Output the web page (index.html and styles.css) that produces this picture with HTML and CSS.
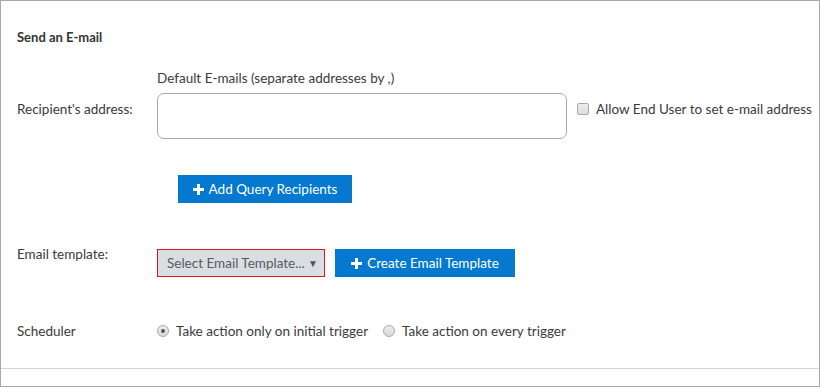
FILE: index.html
```html
<!DOCTYPE html>
<html lang="en">

<head>
  <meta charset="UTF-8">
  <meta name="viewport" content="width=device-width, initial-scale=1.0">
  <title>Send an E-mail</title>
  <link rel="stylesheet" href="styles.css">
</head>

<body>
  <div id="panel">
    <div class="content">
      <h3 class="title">Send an E-mail</h3>

      <div class="recipients">
        <div></div>
        <div class="hint">Default E-mails (separate addresses by ,)</div>
        <label class="field-label label-recipient" for="recipient">Recipient's address:</label>
        <div class="recipient-line">
          <textarea id="recipient" class="address"></textarea>
          <label class="check">
            <span class="box"></span>
            Allow End User to set e-mail address
          </label>
        </div>
      </div>

      <button type="button" class="btn btn-query">
        <span class="plus"></span>Add Query Recipients
      </button>

      <div class="row template-row">
        <label class="field-label label-template">Email template:</label>
        <div class="select">
          <span>Select Email Template...</span>
          <span class="arrow">&#9660;</span>
        </div>
        <button type="button" class="btn btn-create">
          <span class="plus"></span>Create Email Template
        </button>
      </div>

      <div class="row scheduler-row">
        <label class="field-label">Scheduler</label>
        <label class="radio"><span class="dot checked"></span>Take action only on initial trigger</label>
        <label class="radio"><span class="dot"></span>Take action on every trigger</label>
      </div>
    </div>
    <div class="footer"></div>
  </div>
</body>

</html>
```

FILE: styles.css
```css
* {
  margin: 0;
  padding: 0;
  box-sizing: border-box;
}

body {
  background-color: #fff;
  font-family: Lato, "Liberation Sans", sans-serif;
  font-size: 13.5px;
  color: #3a3a3a;
}

#panel {
  width: 820px;
  height: 387px;
  border: 1px solid #a8a8a8;
  display: flex;
  flex-direction: column;
}

.content {
  padding: 28px 16px 0 16px;
  height: 367px;
}

.footer {
  flex: 1;
  border-top: 1px solid #d6d6d6;
}

.title {
  font-size: 13px;
  font-weight: bold;
  line-height: 16px;
  color: #333;
}

.recipients {
  display: grid;
  grid-template-columns: 140px auto;
  margin-top: 25px;
}

.hint {
  line-height: 16px;
  margin-bottom: 7px;
}

.field-label {
  line-height: 16px;
  width: 140px;
  flex: none;
}

.label-recipient {
  padding-top: 8px;
}

.recipient-line {
  display: flex;
  align-items: flex-start;
}

.address {
  width: 410px;
  height: 46px;
  border: 1px solid #aaa;
  border-radius: 7px;
  resize: none;
  outline: none;
}

.check {
  display: flex;
  align-items: center;
  margin-left: 10px;
  margin-top: 8px;
  line-height: 16px;
  white-space: nowrap;
}

.box {
  width: 12px;
  height: 12px;
  border: 1px solid #a9a9a9;
  border-radius: 2px;
  background: linear-gradient(#eee, #ddd);
  margin-right: 7px;
}

.btn {
  display: flex;
  align-items: center;
  justify-content: center;
  height: 28px;
  border: none;
  background-color: #0479cf;
  color: #fff;
  font-family: Lato, "Liberation Sans", sans-serif;
  font-size: 13.5px;
}

.plus {
  position: relative;
  width: 11px;
  height: 11px;
  margin-right: 5px;
}

.plus::before,
.plus::after {
  content: "";
  position: absolute;
  background: #fff;
}

.plus::before {
  left: 4px;
  top: 0;
  width: 3px;
  height: 11px;
}

.plus::after {
  left: 0;
  top: 4px;
  width: 11px;
  height: 3px;
}

.btn-query {
  width: 174px;
  margin: 36px 0 0 161px;
}

.row {
  display: flex;
  align-items: center;
}

.template-row {
  margin-top: 46px;
  align-items: flex-start;
}

.label-template {
  margin-top: -3px;
}

.select {
  display: flex;
  align-items: center;
  justify-content: space-between;
  width: 168px;
  height: 28px;
  padding: 0 6px 0 9px;
  background-color: #d9dee3;
  border: 1px solid #e3141b;
  color: #5a5a5a;
}

.arrow {
  font-size: 10px;
  color: #555;
}

.btn-create {
  width: 180px;
  margin-left: 10px;
}

.scheduler-row {
  margin-top: 46px;
}

.radio {
  display: flex;
  align-items: center;
  line-height: 16px;
  margin-right: 15px;
}

.dot {
  position: relative;
  width: 12px;
  height: 12px;
  border: 1px solid #aaa;
  border-radius: 50%;
  background: linear-gradient(#eee, #d8d8d8);
  margin-right: 7px;
}

.dot.checked::after {
  content: "";
  position: absolute;
  left: 3px;
  top: 3px;
  width: 4px;
  height: 4px;
  border-radius: 50%;
  background: #555;
}
```
